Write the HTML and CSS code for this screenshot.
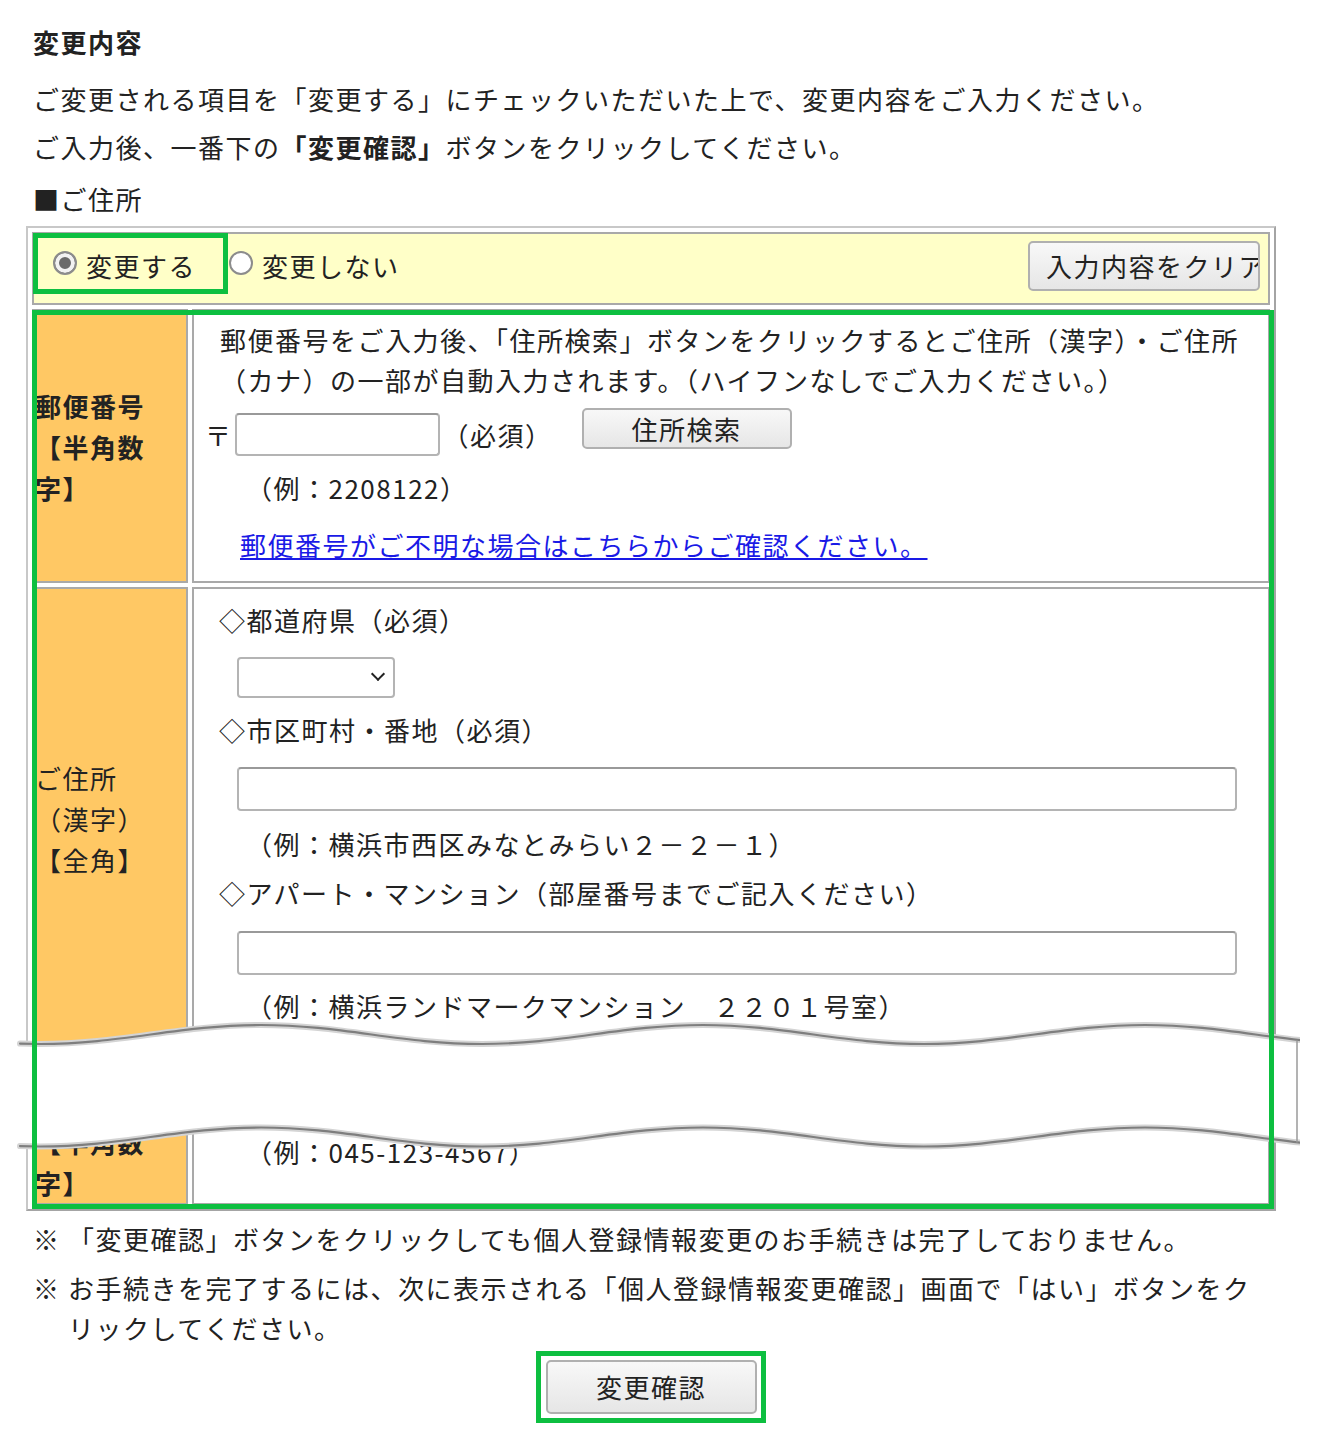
FILE: index.html
```html
<!DOCTYPE html>
<html lang="ja">

<head>
    <meta charset="UTF-8">
    <title>個人登録情報変更</title>
    <link rel="stylesheet" href="styles.css">
</head>

<body>
    <div class="page">

        <h2 class="title">変更内容</h2>
        <p class="lead">ご変更される項目を「変更する」にチェックいただいた上で、変更内容をご入力ください。<br>ご入力後、一番下の<b>「変更確認」</b>ボタンをクリックしてください。</p>
        <h3 class="sec">■ご住所</h3>

        <table class="form-table">
            <tr>
                <td class="switch-cell" colspan="2">
                    <div class="switch">
                        <label class="opt"><input type="radio" name="chg" checked>変更する</label>
                        <label class="opt"><input type="radio" name="chg">変更しない</label>
                        <button class="btn clear-btn" type="button">入力内容をクリア</button>
                    </div>
                </td>
            </tr>
            <tr>
                <td class="label strong">郵便番号【半角数字】</td>
                <td class="content zip">
                    <p class="guide">郵便番号をご入力後、「住所検索」ボタンをクリックするとご住所（漢字）・ご住所（カナ）の一部が自動入力されます。（ハイフンなしでご入力ください。）</p>
                    <div class="zip-line">
                        <span class="zip-mark">〒</span>
                        <input class="text zip-input" type="text">
                        <span>（必須）</span>
                        <button class="btn search-btn" type="button">住所検索</button>
                    </div>
                    <p class="example">（例：2208122）</p>
                    <p class="help"><a href="#">郵便番号がご不明な場合はこちらからご確認ください。</a></p>
                </td>
            </tr>
            <tr>
                <td class="label">ご住所（漢字）【全角】</td>
                <td class="content addr">
                    <p class="item">◇都道府県（必須）</p>
                    <div class="pref-wrap">
                        <select class="pref">
                            <option></option>
                        </select>
                    </div>
                    <p class="item gap">◇市区町村・番地（必須）</p>
                    <input class="text wide" type="text">
                    <p class="example ex-gap">（例：横浜市西区みなとみらい２－２－１）</p>
                    <p class="item">◇アパート・マンション（部屋番号までご記入ください）</p>
                    <input class="text wide wide-b" type="text">
                    <p class="example ex-last">（例：横浜ランドマークマンション　２２０１号室）</p>
                </td>
            </tr>
            <tr>
                <td class="label strong last">電話番号【半角数字】</td>
                <td class="content tel">
                    <input class="text tel-input" type="text">
                    <p class="example ex-gap">（例：045-123-4567）</p>
                </td>
            </tr>
        </table>

        <ul class="notes">
            <li><span class="mark-char">※</span><span>「変更確認」ボタンをクリックしても個人登録情報変更のお手続きは完了しておりません。</span></li>
            <li><span class="mark-char">※</span><span>お手続きを完了するには、次に表示される「個人登録情報変更確認」画面で「はい」ボタンをクリックしてください。</span></li>
        </ul>

        <div class="submit">
            <button class="btn submit-btn" type="button">変更確認</button>
        </div>

        <!-- 省略部分 -->
        <svg class="cut" width="1300" height="170" viewBox="0 0 1300 170">
            <path fill="#fff" d="M20 43.6 L40 44 C120.5 44 180.5 25 261 25 C341.5 25 401.5 44 482 44 C562.5 44 622.5 25 703 25 C783.5 25 843.5 44 924 44 C1004.5 44 1064.5 25 1145 25 C1225.5 25 1285.5 44 1366 44 L1366 146.5 C1285.5 146.5 1225.5 127.5 1145 127.5 C1064.5 127.5 1004.5 146.5 924 146.5 C843.5 146.5 783.5 127.5 703 127.5 C622.5 127.5 562.5 146.5 482 146.5 C401.5 146.5 341.5 127.5 261 127.5 C180.5 127.5 120.5 146.5 40 146.5 L20 146.1 Z" />
            <g fill="none" stroke-linecap="round">
                <path stroke="#d4d4d4" stroke-width="6" d="M20 43.6 L40 44 C120.5 44 180.5 25 261 25 C341.5 25 401.5 44 482 44 C562.5 44 622.5 25 703 25 C783.5 25 843.5 44 924 44 C1004.5 44 1064.5 25 1145 25 C1225.5 25 1285.5 44 1366 44" />
                <path stroke="#d4d4d4" stroke-width="6" d="M20 146.1 L40 146.5 C120.5 146.5 180.5 127.5 261 127.5 C341.5 127.5 401.5 146.5 482 146.5 C562.5 146.5 622.5 127.5 703 127.5 C783.5 127.5 843.5 146.5 924 146.5 C1004.5 146.5 1064.5 127.5 1145 127.5 C1225.5 127.5 1285.5 146.5 1366 146.5" />
                <path stroke="#7e7e7e" stroke-width="2.2" d="M20 43.6 L40 44 C120.5 44 180.5 25 261 25 C341.5 25 401.5 44 482 44 C562.5 44 622.5 25 703 25 C783.5 25 843.5 44 924 44 C1004.5 44 1064.5 25 1145 25 C1225.5 25 1285.5 44 1366 44" />
                <path stroke="#7e7e7e" stroke-width="2.2" d="M20 146.1 L40 146.5 C120.5 146.5 180.5 127.5 261 127.5 C341.5 127.5 401.5 146.5 482 146.5 C562.5 146.5 622.5 127.5 703 127.5 C783.5 127.5 843.5 146.5 924 146.5 C1004.5 146.5 1064.5 127.5 1145 127.5 C1225.5 127.5 1285.5 146.5 1366 146.5" />
                <line x1="1297" y1="41" x2="1297" y2="142" stroke="#9a9a9a" stroke-width="1.5" />
            </g>
        </svg>

        <!-- 注釈の枠 -->
        <div class="mark mark-radio"></div>
        <div class="mark mark-rows"></div>
        <div class="mark mark-submit"></div>

    </div>
</body>

</html>
```

FILE: styles.css
```css
body {
    margin: 0;
    background-color: white;
    color: #222;
    font-family: "Noto Sans CJK JP", "Noto Sans", sans-serif;
    font-size: 26px;
    letter-spacing: 1.5px;
}

.page {
    position: relative;
    width: 1250px;
    padding: 0 44px 20px 26px;
}

.title {
    margin: 0;
    padding: 18px 0 0 7px;
    font-size: 26px;
    font-weight: 700;
    line-height: 48px;
}

.lead {
    margin: 9px 0 0;
    padding-left: 7px;
    line-height: 48px;
}

.lead b {
    font-weight: 700;
}

.sec {
    margin: 4px 0 3px;
    padding-left: 7px;
    font-size: 26px;
    font-weight: 400;
    line-height: 48px;
}

/* table */

.form-table {
    width: 100%;
    border-collapse: separate;
    border-spacing: 4px;
    border: 2px solid #c8c8c8;
    border-right-color: #a4a4a4;
    border-bottom-color: #a4a4a4;
}

.form-table td {
    border: 2px solid #a9a9a9;
    padding: 0;
    vertical-align: top;
}

.switch-cell {
    background-color: #ffffc8;
}

.switch {
    display: flex;
    align-items: center;
    height: 69px;
    box-sizing: border-box;
    padding: 0 8px 6px 19px;
}

.opt {
    display: flex;
    align-items: center;
    margin-right: 33px;
    line-height: 40px;
}

.opt input {
    appearance: none;
    width: 24px;
    height: 24px;
    margin: 0 9px 6px 0;
    box-sizing: border-box;
    border: 2px solid #8c8c8c;
    border-radius: 50%;
    background-color: white;
}

.opt input:checked {
    background-color: #6a6a6a;
    box-shadow: inset 0 0 0 4px #f2f2f2;
}

.btn {
    font: inherit;
    letter-spacing: inherit;
    color: #222;
    box-sizing: border-box;
    border: 2px solid #b0b0b0;
    border-radius: 5px;
    background: linear-gradient(#f8f8f8, #e6e6e6);
    padding: 0;
    line-height: 1;
}

.clear-btn {
    margin-left: auto;
    width: 232px;
    height: 50px;
    padding-left: 16px;
    text-align: left;
    white-space: nowrap;
    overflow: hidden;
}

.label {
    width: 125px;
    padding: 0 26px 0 1px !important;
    background-color: #ffc864;
    vertical-align: middle !important;
    line-height: 41px;
}

.label.strong {
    font-weight: 700;
}

.label.last {
    vertical-align: bottom !important;
}

.content {
    background-color: white;
    line-height: 40px;
}

.content p {
    margin: 0;
}

.zip {
    padding: 9px 18px 16px 0 !important;
}

.guide {
    margin-left: 26px !important;
}

.zip-line {
    display: flex;
    align-items: center;
    margin: 8px 0 0 11px;
}

.zip-mark {
    margin-right: 2px;
}

.text {
    display: block;
    box-sizing: border-box;
    border: 2px solid #b4b4b4;
    border-top-color: #999;
    border-radius: 4px;
    background-color: white;
    font: inherit;
}

.zip-input {
    width: 205px;
    height: 43px;
    margin-right: 3px;
}

.search-btn {
    width: 210px;
    height: 41px;
    margin: 0 0 12px 29px;
}

.example {
    margin-left: 52px !important;
}

.zip .example {
    margin-top: 7px !important;
}

.help {
    margin: 17px 0 0 46px !important;
}

.help a {
    color: #1a1ae6;
    text-decoration: underline;
}

.addr {
    padding: 11px 18px 21px 0 !important;
}

.item {
    margin-left: 25px !important;
}

.item.gap {
    margin-top: 12px !important;
}

.pref-wrap {
    position: relative;
    width: 158px;
    margin: 17px 0 0 43px;
}

.pref {
    display: block;
    appearance: none;
    width: 158px;
    height: 41px;
    box-sizing: border-box;
    border: 2px solid #b4b4b4;
    border-radius: 4px;
    background-color: white;
    font: inherit;
}

.pref-wrap::after {
    content: "";
    position: absolute;
    left: 136px;
    top: 12px;
    width: 10px;
    height: 10px;
    box-sizing: border-box;
    border-right: 2.5px solid #222;
    border-bottom: 2.5px solid #222;
    transform: rotate(45deg);
}

.wide {
    width: 1000px;
    height: 44px;
    margin: 17px 0 0 43px;
}

.wide-b {
    margin-top: 18px;
}

.ex-gap {
    margin-top: 13px !important;
}

.addr .ex-gap {
    margin-bottom: 9px !important;
}

.ex-last {
    margin-top: 11px !important;
}

.tel {
    padding: 20px 18px 31px 0 !important;
}

.tel-input {
    width: 300px;
    height: 44px;
    margin-left: 43px;
}

/* notes */

.notes {
    list-style: none;
    margin: 8px 11px 0 0;
    padding: 0 0 0 7px;
    line-height: 40px;
}

.notes li {
    display: flex;
}

.notes li + li {
    margin-top: 9px;
}

.mark-char {
    flex: none;
    width: 35px;
}

.submit {
    margin-top: 12px;
    text-align: center;
}

.submit-btn {
    width: 211px;
    height: 54px;
}

/* overlays */

.cut {
    position: absolute;
    left: 0;
    top: 1000px;
}

.mark {
    position: absolute;
    box-sizing: border-box;
    border: 5px solid #0dbf40;
    pointer-events: none;
}

.mark-radio {
    left: 33px;
    top: 233px;
    width: 195px;
    height: 61px;
}

.mark-rows {
    left: 32px;
    top: 310px;
    width: 1242px;
    height: 899px;
}

.mark-submit {
    left: 536px;
    top: 1351px;
    width: 230px;
    height: 72px;
}
```
